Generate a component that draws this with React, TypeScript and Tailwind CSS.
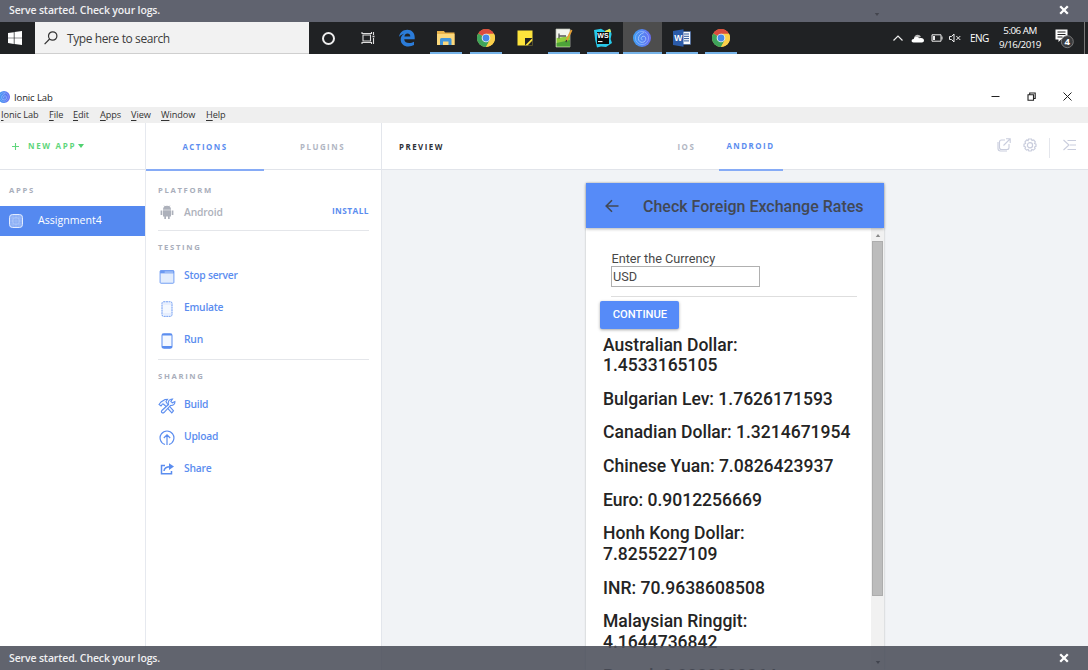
import React from "react";

const UI = "font-['Open_Sans','Noto_Sans',sans-serif]";

function Chrome() {
  return (
    <svg viewBox="0 0 18 18" className="h-[18px] w-[18px]">
      <circle cx="9" cy="9" r="9" fill="#fbd04b" />
      <path d="M9 9 1.2 4.5A9 9 0 0 1 16.8 4.5Z" fill="#db4c3f" />
      <path d="M9 9 1.2 4.5A9 9 0 0 0 9 18L12.9 11.2Z" fill="#3fa45b" />
      <path d="M9 4.8H17A9 9 0 0 1 9 18L12.7 11Z" fill="#fbd04b" />
      <circle cx="9" cy="9" r="4.3" fill="#eef1f6" />
      <circle cx="9" cy="9" r="3.4" fill="#4688e8" />
    </svg>
  );
}

function IonicLogo({ id, size }: { id: string; size: string }) {
  return (
    <svg viewBox="0 0 18 18" className={size}>
      <defs>
        <linearGradient id={id} x1="0" y1="0" x2="1" y2="0">
          <stop offset="0" stopColor="#3fa0f3" />
          <stop offset="1" stopColor="#6a6cf0" />
        </linearGradient>
      </defs>
      <circle cx="9" cy="9" r="9" fill={`url(#${id})`} />
      <g fill="none" stroke="#a9c8ff" strokeWidth="0.9">
        <circle cx="9" cy="9" r="6.6" opacity="0.6" />
        <path d="M10.8 3.6C7.4 4.8 5.4 7 5.4 9.7a3.7 3.7 0 1 0 7.3-.9c-.5-1.5-2.3-2-3.6-1.1-1.3 1-1.2 3 .4 3.1" />
      </g>
    </svg>
  );
}

function Edge() {
  return (
    <svg viewBox="0 0 18 18" className="h-[18px] w-[18px]">
      <path
        fill="#2b7cd9"
        d="M1 8C1.6 3.600 5 .8 9.300.8c4.600 0 7.400 3.200 7.400 7.500v2H6.200c.2 2.600 2.400 3.800 5 3.800 1.800 0 3.400-.5 4.800-1.300v3.300c-1.600.9-3.500 1.300-5.600 1.300-4.600 0-7.700-2.700-7.700-7 0-2.500 1.300-4.500 3.400-5.700C3.900 5.200 2.300 6.200 1 8Zm5.400-.6h5.900c0-1.900-1-3-2.800-3-1.700 0-2.800 1.200-3.100 3Z"
      />
    </svg>
  );
}

function Explorer() {
  return (
    <svg viewBox="0 0 18 16" className="h-[16px] w-[18px]">
      <path d="M0 1h7l1 1.500H17.500V15H0Z" fill="#e9b44c" />
      <path d="M0 4H17.500V15H0Z" fill="#fbd87c" />
      <path d="M3 15V9.500Q3 8 4.500 8H13Q14.500 8 14.500 9.500V15H11.500V11.500H6V15Z" fill="#4095dc" />
    </svg>
  );
}

function Sticky() {
  return (
    <svg viewBox="0 0 16 16" className="h-[16px] w-[16px]">
      <path d="M.5.5h15v15H.5Z" fill="#fde43c" />
      <path d="M8 8h7.500L8 15.500Z" fill="#202224" />
      <path d="M10.500 15.500l5-5v5Z" fill="#202224" />
    </svg>
  );
}

function NotepadPlus() {
  return (
    <svg viewBox="0 0 18 20" className="h-[20px] w-[18px]">
      <path d="M1 1h14v18H1Z" fill="#f3f5ee" stroke="#b9bdb3" strokeWidth=".7" />
      <path d="M1.600 10 15 8v10.400H1.600Z" fill="#8fcf3c" />
      <path d="M1.600 15 15 12v6.400H1.600Z" fill="#4da338" />
      <path d="M4 5.500v5M4 8h7" stroke="#555" strokeWidth="1.300" />
      <path d="m16.600 2-5.400 11" stroke="#e49f36" strokeWidth="1.800" />
      <path d="m11.600 12-.6 2.200" stroke="#333" strokeWidth="1.200" />
    </svg>
  );
}

function WebStorm() {
  return (
    <svg viewBox="0 0 20 20" className="h-[20px] w-[20px]">
      <path d="M1 2 8 .8 12 3l5-2.200L18.600 6l-1 5L19 15l-6 4-5-.5L4 19.500 2.200 12Z" fill="#27c8e8" />
      <path d="M12 3l5-2.200L18 4 12 5Z" fill="#e8ea55" />
      <rect x="4" y="4" width="12" height="12" fill="#0b0b0b" />
      <text x="4.300" y="10.300" fontSize="7" fontWeight="700" fill="#fff" fontFamily="Liberation Sans">WS</text>
      <path d="M5 13.600h4.500" stroke="#fff" strokeWidth="1" />
    </svg>
  );
}

function Word() {
  return (
    <svg viewBox="0 0 18 18" className="h-[18px] w-[18px]">
      <rect x="9" y="2.500" width="8.600" height="13" fill="#f7f9fc" stroke="#2c579a" strokeWidth=".6" />
      <path d="M11 5h5M11 7.300h5M11 9.600h5M11 11.900h5" stroke="#2c579a" strokeWidth="1" />
      <path d="M0 2 10.500.3v17.400L0 16Z" fill="#2b5ba9" />
      <text x="1.300" y="12.200" fontSize="8.500" fontWeight="700" fill="#fff" fontFamily="Liberation Sans">W</text>
    </svg>
  );
}

function TaskCell({ children, open, active }: { children: React.ReactNode; open?: boolean; active?: boolean }) {
  return (
    <div className={`flex h-full w-[39.240px] flex-col items-center ${active ? "bg-[#4d4d4d]" : ""}`}>
      <div className="flex flex-1 items-center justify-center">{children}</div>
      <div className={`-mt-[2px] h-[2px] ${active ? "w-full" : "w-8"} ${open || active ? "bg-[#76b3e8]" : ""}`} />
    </div>
  );
}

function Close() {
  return (
    <svg viewBox="0 0 10 10" className="h-[10px] w-[10px]">
      <path d="m1.200 1.200 7.600 7.600M8.800 1.200 1.200 8.800" stroke="#fff" strokeWidth="2.300" />
    </svg>
  );
}

function Taskbar() {
  return (
    <div className={`flex h-8 shrink-0 bg-[#202224] text-white ${UI}`}>
      <div className="flex w-[35px] items-center pl-[8px]">
        <svg viewBox="0 0 14 14" className="h-[14px] w-[14px]">
          <path fill="#fff" d="M0 2 5.800 1.200V6.700H0ZM6.500 1.100 14 0v6.700H6.500ZM0 7.300h5.800v5.600L0 12ZM6.500 7.300H14V14L6.500 13Z" />
        </svg>
      </div>
      <div className="flex w-[274px] items-center border-b border-[#cfcfcf] bg-[#f2f2f2] pl-[9px] text-[#3c3c3c]">
        <svg viewBox="0 0 14 14" className="h-[14px] w-[14px]" fill="none" stroke="#333" strokeWidth="1.200">
          <circle cx="8.700" cy="5" r="4.200" />
          <path d="M5.600 8 .6 13.200" />
        </svg>
        <span className="ml-[9px] pt-[3px] text-[12px] tracking-[-0.400px]">Type here to search</span>
      </div>
      <TaskCell>
        <div className="h-[13px] w-[13px] rounded-full border-2 border-[#eee]" />
      </TaskCell>
      <TaskCell>
        <svg viewBox="0 0 14 14" className="h-[14px] w-[14px]" fill="none" stroke="#ddd" strokeWidth="1.100">
          <path d="M2 4h7.500v6H2ZM1 1v1.500h9.500V1M1 13v-1.500h9.500V13M12.500 1v3M12.500 7v6" />
          <path d="M11.500 5.500h2" strokeWidth="1.600" />
        </svg>
      </TaskCell>
      <TaskCell><Edge /></TaskCell>
      <TaskCell open><Explorer /></TaskCell>
      <TaskCell open><Chrome /></TaskCell>
      <TaskCell><Sticky /></TaskCell>
      <TaskCell open><NotepadPlus /></TaskCell>
      <TaskCell open><WebStorm /></TaskCell>
      <TaskCell active><IonicLogo id="tb" size="h-[18px] w-[18px]" /></TaskCell>
      <TaskCell open><Word /></TaskCell>
      <TaskCell open><Chrome /></TaskCell>
      <div className="ml-auto flex items-center">
        <svg viewBox="0 0 10 6" className="h-[6px] w-[10px]" fill="none" stroke="#eee" strokeWidth="1.200">
          <path d="M.5 5.500 5 1l4.500 4.500" />
        </svg>
        <svg viewBox="0 0 14 9" className="ml-[8px] h-[9px] w-[14px]">
          <path d="M3 5C2.500 1 8-1 10 3Z" fill="#bbb" />
          <path d="M2.500 8.500C0 8.500 0 5 2.700 5 3.500 2.500 7 2.700 8 4.300c3-1 5 .2 5 2.200 0 1.300-1 2-2 2Z" fill="#fff" />
        </svg>
        <svg viewBox="0 0 12 8" className="ml-[6px] h-[8px] w-[12px]">
          <path d="M1 .8h9v6.400H1Z" fill="none" stroke="#eee" strokeWidth="1" />
          <path d="M2 2h2v4H2ZM10.500 2.500h1v3h-1Z" fill="#eee" />
        </svg>
        <svg viewBox="0 0 12 10" className="ml-[6px] h-[10px] w-[12px]" fill="none" stroke="#eee" strokeWidth="1">
          <path d="M.5 3.500h2L5 1v8L2.500 6.500h-2ZM7.300 3l4 4M11.300 3l-4 4" />
        </svg>
        <span className="ml-[9px] w-[19px] text-[10px] tracking-[-0.500px]">ENG</span>
        <div className="ml-[9px] w-[44px] text-center text-[9.800px] leading-[14px] tracking-[-0.500px] whitespace-nowrap">
          <div>5:06 AM</div>
          <div>9/16/2019</div>
        </div>
        <svg viewBox="0 0 20 22" className="ml-[12px] h-[22px] w-[20px]">
          <path d="M1.500 2.500h12v10H7l-2.500 2.500v-2.500h-3Z" fill="#fff" />
          <path d="M3.500 5h8M3.500 7.500h8M3.500 10h5" stroke="#222" strokeWidth="1" />
          <circle cx="13.300" cy="14.700" r="6" fill="#3a3b3d" stroke="#8a8a8a" strokeWidth=".8" />
          <text x="13.300" y="18.300" fontSize="9.500" fontWeight="700" fill="#fff" textAnchor="middle" fontFamily="Open Sans">4</text>
        </svg>
        <div className="ml-[10px] h-8 w-[4px] border-l border-[#777]" />
      </div>
    </div>
  );
}

function WindowChrome() {
  const menus = [
    ["Ionic Lab", "w-[48px]"],
    ["File", "w-[24px]"],
    ["Edit", "w-[27px]"],
    ["Apps", "w-[31px]"],
    ["View", "w-[30px]"],
    ["Window", "w-[45px]"],
    ["Help", "w-[30px]"],
  ];
  return (
    <div className={`flex h-[69px] shrink-0 flex-col bg-white pt-[32px] text-[#1c1c1c] ${UI}`}>
      <div className="flex h-[21px] items-center">
        <div className="-ml-[2px] h-3 w-3">
          <IonicLogo id="tt" size="h-3 w-3 block" />
        </div>
        <span className="ml-[4px] pt-[3px] text-[9.500px] tracking-[-0.120px]">Ionic Lab</span>
        <div className="ml-auto flex items-center gap-[27px] pr-[16px]">
          <svg viewBox="0 0 9 9" className="h-[9px] w-[9px]" stroke="#222" strokeWidth="1"><path d="M.5 4.500h8" /></svg>
          <svg viewBox="0 0 9 9" className="h-[9px] w-[9px]" fill="none" stroke="#222" strokeWidth="1.100"><path d="M1 2.700h5.500v5.500H1ZM2.700 2.700V1h5.500v5.500H6.500" /></svg>
          <svg viewBox="0 0 9 9" className="h-[9px] w-[9px]" stroke="#222" strokeWidth="1"><path d="m.5.5 8 8M8.500.5l-8 8" /></svg>
        </div>
      </div>
      <div className="flex h-[16px] items-center bg-[#efefef] pl-[1px] text-[9.200px] tracking-[-0.080px] text-[#333]">
        {menus.map(([m, w]) => (
          <span key={m} className={`whitespace-nowrap ${w}`}>
            <span className="underline underline-offset-2">{m[0]}</span>
            {m.slice(1)}
          </span>
        ))}
      </div>
    </div>
  );
}

function Heading({ children }: { children: React.ReactNode }) {
  return <div className="text-[7.700px] leading-[10px] font-bold tracking-[1.660px] text-[#a9aebb]">{children}</div>;
}

function Action({ icon, label }: { icon: React.ReactNode; label: string }) {
  return (
    <div className="flex h-8 items-center text-[10.300px] font-semibold tracking-[-0.240px] text-[#5b8def]">
      <span className="flex w-[18px] justify-center pt-[2px]">{icon}</span>
      <span className="ml-[8px]">{label}</span>
    </div>
  );
}

function AppsColumn() {
  return (
    <div className="flex w-[146px] shrink-0 flex-col border-r border-[#e6e9ef] bg-white">
      <div className="flex h-[47px] items-center border-b border-[#e1e4ea] pl-[12px] text-[8px] font-bold tracking-[1.680px] text-[#5fd67c]">
        <svg viewBox="0 0 7 7" className="h-[7px] w-[7px]" stroke="#5fd67c" strokeWidth="1.100"><path d="M3.500 0v7M0 3.500h7" /></svg>
        <span className="ml-[9px]">NEW APP</span>
        <svg viewBox="0 0 6 4" className="ml-[2px] h-[4px] w-[6px]"><path d="M0 0h6L3 4Z" fill="#4fd170" /></svg>
      </div>
      <div className="pt-[15px] pl-[9px]"><Heading>APPS</Heading></div>
      <div className="mt-[11px] flex h-[30px] w-[145px] items-center bg-[#5589f0] pl-[9px] text-white">
        <svg viewBox="0 0 14 14" className="h-[14px] w-[14px]" fill="#8caff6" stroke="#e3ecff" strokeWidth="1">
          <rect x=".5" y=".5" width="13" height="13" rx="3" />
          <path d="M4 1v12M7 1v12M10 1v12M1 4h12M1 7h12M1 10h12" stroke="#b4ccfa" strokeWidth=".4" />
          <circle cx="7" cy="7" r="3.500" fill="none" stroke="#b4ccfa" strokeWidth=".5" />
        </svg>
        <span className="ml-[15px] text-[10.600px] font-medium">Assignment4</span>
      </div>
    </div>
  );
}

function ActionsColumn() {
  return (
    <div className="flex w-[236px] shrink-0 flex-col border-r border-[#e3e6ec] bg-white">
      <div className="flex h-[47px] border-b border-[#e1e4ea] text-[7.900px] font-bold tracking-[1.500px]">
        <div className="z-10 -mb-[2px] flex w-[118px] items-center justify-center border-b-2 border-[#86abf6] pt-[3px] text-[#5b8def]">ACTIONS</div>
        <div className="flex flex-1 items-center justify-center pt-[3px] text-[#b1b6c3]">PLUGINS</div>
      </div>
      <div className="flex flex-col px-[12px] pt-[15px]">
        <Heading>PLATFORM</Heading>
        <div className="flex h-[36px] items-center border-b border-[#e4e6ea] pb-[2px] text-[10.300px] font-semibold text-[#adb1bb]">
          <span className="flex w-[18px] justify-center pt-[2px]">
            <svg viewBox="0 0 14 15" className="h-[15px] w-[14px]" fill="#adb1bb">
              <path d="M3 4.700A4 4 0 0 1 11 4.700ZM3 5.300h8v6.200H9.700V14H8v-2.500H6V14H4.300v-2.500H3ZM.6 5.400h1.700v4.500H.6ZM11.700 5.400h1.700v4.500h-1.700Z" />
              <path d="m4 .5 1.300 2M10 .5 8.700 2.500" stroke="#adb1bb" strokeWidth=".6" />
            </svg>
          </span>
          <span className="ml-[8px] pt-[3px] tracking-[-0.150px]">Android</span>
          <span className="ml-auto text-[8.300px] font-bold tracking-[0.450px] text-[#5b8def]">INSTALL</span>
        </div>
        <div className="pt-[11px] pb-[8px]"><Heading>TESTING</Heading></div>
        <Action label="Stop server" icon={
          <svg viewBox="0 0 16 15" className="h-[14px] w-[16px]"><rect x=".6" y=".6" width="14.800" height="13.600" rx="1" fill="#e3edfd" stroke="#6b99f2" /><path d="M.6.6h14.800v3H.6Z" fill="#6b99f2" /><path d="M5.500 2.200h9" stroke="#c9dbfb" /></svg>
        } />
        <Action label="Emulate" icon={
          <svg viewBox="0 0 12 16" className="h-[16px] w-[12px]"><rect x="1" y=".8" width="10" height="14.500" rx="1.500" fill="#f4f8ff" stroke="#6b99f2" strokeDasharray="2 .5" /><path d="M1.500 3h9M1.500 13h9" stroke="#cfdefb" strokeWidth=".7" /></svg>
        } />
        <Action label="Run" icon={
          <svg viewBox="0 0 12 16" className="h-[16px] w-[12px]"><rect x="1" y=".8" width="10" height="14.500" rx="1.500" fill="#f4f8ff" stroke="#5b8def" /><path d="M1 1.700h10M1 14h10" stroke="#5b8def" strokeWidth="1.800" /></svg>
        } />
        <div className="mt-[3px] border-t border-[#e4e6ea] pt-[11px] pb-[8px]"><Heading>SHARING</Heading></div>
        <Action label="Build" icon={
          <svg viewBox="0 0 18 16" className="h-[16px] w-[18px]" fill="#f1f6ff" stroke="#5b8def" strokeWidth="1.100">
            <path d="M1 6.500 3 4 7 1.500l2.500-.2L8 3.500l1 1.800 6.500 7.500-1.700 2L7 7.500 5.300 6 4.500 6 3 8Z" />
            <path d="M10.500 6.500C9.500 3.500 11.500.8 14.500 1L12.800 3.300l1.500 1.500 2.600-1.300c.3 2.700-2 4.400-4.400 4L6 14.500c-1.400 1.300-3.500-.6-2.200-2Z" />
          </svg>
        } />
        <Action label="Upload" icon={
          <svg viewBox="0 0 16 16" className="h-[16px] w-[16px]" fill="none" stroke="#5b8def" strokeWidth="1.200">
            <path d="M6 14.500A6.900 6.900 0 1 1 10 14.500M8 15V5M4.800 8 8 4.800 11.200 8" />
          </svg>
        } />
        <Action label="Share" icon={
          <svg viewBox="0 0 14 12" className="-mt-[2px] h-[12px] w-[14px]" fill="none" stroke="#5b8def" strokeWidth="1.500">
            <path d="M5 2.500H1.500v8.300h10V8M4 8c.3-3 2.300-4.200 6-4.200" />
            <path d="M9 .3v6.600l5-3.300Z" fill="#5b8def" stroke="none" />
          </svg>
        } />
      </div>
    </div>
  );
}

const rates: string[][] = [
  ["Australian Dollar:", "1.4533165105"],
  ["Bulgarian Lev: 1.7626171593"],
  ["Canadian Dollar: 1.3214671954"],
  ["Chinese Yuan: 7.0826423937"],
  ["Euro: 0.9012256669"],
  ["Honh Kong Dollar:", "7.8255227109"],
  ["INR: 70.9638608508"],
  ["Malaysian Ringgit:", "4.1644736842"],
  ["Pound: 0.8020220264"],
];

function Phone() {
  return (
    <div className="ml-[204px] flex w-[298px] flex-col bg-white font-[Roboto,sans-serif] shadow-[0_0_2px_rgba(0,0,0,0.25)]">
      <div className="z-10 flex h-[45px] shrink-0 items-center bg-[#568bf8] pl-[19px] text-[#424854] shadow-[0_1px_3px_rgba(0,0,0,0.3)]">
        <svg viewBox="0 0 14 14" className="h-[14px] w-[14px]" fill="none" stroke="#424854" strokeWidth="1.600">
          <path d="M13.500 7H1.500M7 1.200 1.200 7 7 12.800" />
        </svg>
        <span className="ml-[24px] pt-[2px] text-[16px] font-medium whitespace-nowrap">Check Foreign Exchange Rates</span>
      </div>
      <div className="flex min-h-0 flex-1">
        <div className="flex flex-1 flex-col overflow-hidden">
          <div className="mr-[14px] ml-[25px] flex h-[69px] shrink-0 flex-col border-b border-[#dedede] pt-[22px] text-[12.700px] text-[#484848]">
            <div className="h-[16px] pl-[0.500px] leading-[17px] whitespace-nowrap">Enter the Currency</div>
            <div className="h-[21px] w-[149px] border border-[#b0b0b0] pl-[1px] leading-[19px]">USD</div>
          </div>
          <div className="mt-[4px] ml-[14px] flex h-[28px] w-[79px] shrink-0 items-center justify-center rounded-[2px] bg-[#568bf8] pl-px text-[11.200px] font-medium text-white shadow-[0_1px_3px_rgba(0,0,0,0.35)]">CONTINUE</div>
          <div className="mt-[5.600px] flex shrink-0 flex-col gap-[13.050px] pl-[17px] text-[17.540px] leading-[20.600px] font-medium whitespace-nowrap text-[#242424]">
            {rates.map((r) => (
              <div key={r[0]}>{r.map((t) => <div key={t}>{t}</div>)}</div>
            ))}
          </div>
        </div>
        <div className="flex w-[13px] flex-col items-center bg-[#f1f1f1]">
          <svg viewBox="0 0 6 4" className="mt-[6px] mb-[4px] h-[3px] w-[6px]"><path d="M0 4h6L3 0Z" fill="#8a8a8a" /></svg>
          <div className="h-[355px] w-[11px] border border-[#adadad] bg-[#bcbcbc]" />
          <svg viewBox="0 0 6 4" className="mt-auto mb-[6px] h-[3px] w-[6px]"><path d="M0 0h6L3 4Z" fill="#000" /></svg>
        </div>
      </div>
    </div>
  );
}

function Preview() {
  return (
    <div className="flex min-w-0 flex-1 flex-col bg-[#f1f3f6]">
      <div className="flex h-[47px] shrink-0 items-center border-b border-[#e1e4ea] bg-white pl-[17px] text-[7.900px] font-bold tracking-[1.500px]">
        <span className="w-[278.500px] pt-[3px] text-[#2e3138]">PREVIEW</span>
        <span className="w-[41px] pt-[3px] text-[#b1b6c3]">IOS</span>
        <div className="z-10 -mb-[2px] flex h-[48px] w-[64px] items-center justify-center border-b-2 border-[#86abf6] pt-[2px] text-[#5b8def]">ANDROID</div>
        <div className="ml-auto flex items-center pr-[12px] pb-[3px]">
          <svg viewBox="0 0 14 14" className="h-[14px] w-[14px]" fill="none" stroke="#c9cddd" strokeWidth="1.100">
            <path d="M8 2H4.500Q2.500 2 2.500 4v5.500q0 2 2 2h5.500q2 0 2-2V6M9 .8h4.200V5M13 1 6.500 7.500M1 4v6.500q0 2.500 2.500 2.500H10" />
          </svg>
          <svg viewBox="0 0 14 14" className="ml-[12px] h-[14px] w-[14px]" fill="none" stroke="#c9cddd" strokeWidth="1.200">
            <path d="M5.500 1h3l.5 1.500 1.700-.5 1.600 1.900L11.500 5.500l1.500.6v2.300l-1.500.6.6 1.600-1.800 1.500-1.500-.6-.6 1.500H5.800l-.6-1.500-1.600.6L2 10.600 2.600 9 1 8.400V6.100L2.600 5.500 2 3.900 3.600 2l1.500.6Z" />
            <circle cx="7" cy="7.200" r="2.600" />
          </svg>
          <div className="mt-[6px] ml-[12px] h-[20px] w-px bg-[#e4e6ec]" />
          <svg viewBox="0 0 13 12" className="ml-[13px] h-[12px] w-[13px]" fill="none" stroke="#c9cddd" strokeWidth="1.100">
            <path d="M.5 1 6 6 .5 11M4.500 1.500H13M7 6h6M4.500 10.500H13" />
          </svg>
        </div>
      </div>
      <div className="flex min-h-0 flex-1 pt-[13px]"><Phone /></div>
    </div>
  );
}

export default function App() {
  return (
    <div className="relative flex h-[670px] w-[1088px] flex-col overflow-hidden bg-white">
      <div className={`flex h-[22px] shrink-0 items-center justify-between bg-[#60636f] pr-[19px] pb-[2px] pl-[9px] text-[10.500px] font-semibold tracking-[-0.140px] text-[#f0f0f2] ${UI}`}>
        <span className="pt-px">Serve started. Check your logs.</span>
        <div className="flex items-center gap-[179px]">
          <svg viewBox="0 0 6 4" className="mt-[9px] h-[3px] w-[6px]"><path d="M0 0h6L3 4Z" fill="#44464f" /></svg>
          <Close />
        </div>
      </div>
      <Taskbar />
      <WindowChrome />
      <div className={`flex min-h-0 flex-1 ${UI}`}>
        <AppsColumn />
        <ActionsColumn />
        <Preview />
      </div>
      <div className={`absolute inset-x-0 bottom-0 z-20 flex h-[24px] items-center justify-between bg-[#4b4e5a]/88 pr-[19px] pl-[9px] text-[10.500px] font-semibold tracking-[-0.140px] text-[#f0f0f2] ${UI}`}>
        <span className="pt-px">Serve started. Check your logs.</span>
        <Close />
      </div>
    </div>
  );
}
